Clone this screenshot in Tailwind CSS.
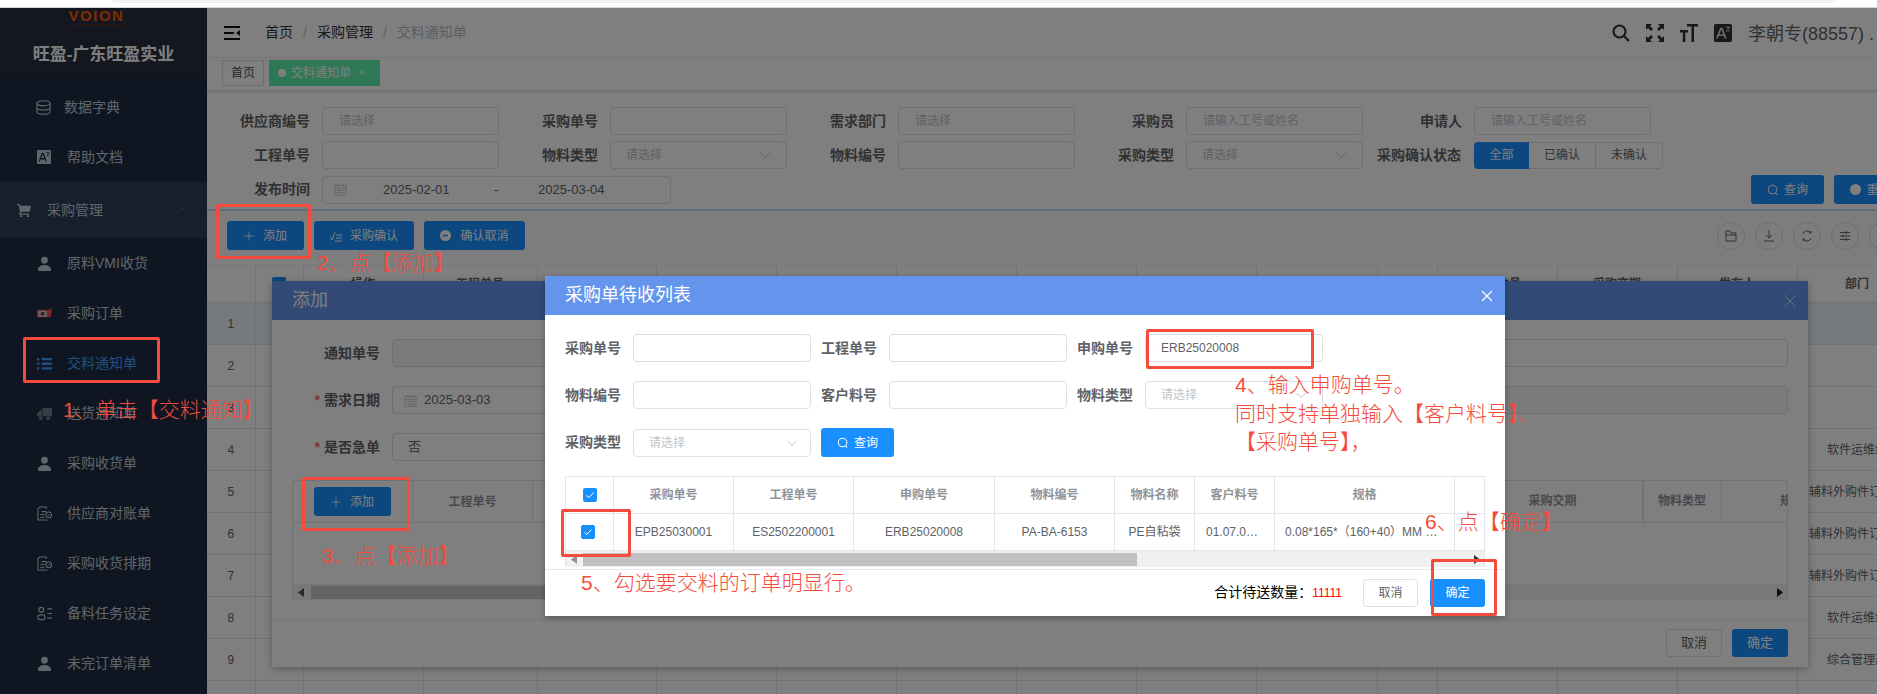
<!DOCTYPE html>
<html lang="zh-CN">
<head>
  <meta charset="UTF-8">
  <title>交料通知单</title>
  <script src="https://cdn.jsdelivr.net/npm/@tailwindcss/browser@4"></script>
</head>
<body class="relative h-[694px] w-[1877px] overflow-hidden bg-white font-['Liberation_Sans','Noto_Sans_CJK_SC',sans-serif] text-[12px] text-[#606266]">
  <svg class="absolute h-0 w-0">
    <symbol id="i-user" viewBox="0 0 16 16"><circle cx="8" cy="4.5" r="3.6" fill="currentColor"/><path d="M1 15c0-4 3-5.5 7-5.5s7 1.500 7 5.500c0 .6-.4 1-1 1H2c-.6 0-1-.4-1-1z" fill="currentColor"/></symbol>
    <symbol id="i-doc" viewBox="0 0 16 16"><path d="M10 3V1H3L1 3v12h10M5 6h5M3.500 9H8M3.500 12H8" fill="none" stroke="currentColor" stroke-width="1.100"/><circle cx="12.500" cy="9.500" r="3" fill="none" stroke="currentColor" stroke-width="1.100"/><path d="M11.200 9.500l1 1 1.500-1.800" fill="none" stroke="currentColor"/></symbol>
    <symbol id="i-calendar" viewBox="0 0 14 14"><path d="M1 2.500h12v10.500H1zM1 5.500h12M4 1v2.500M10 1v2.500M3 8h8M3 10.500h8" fill="none" stroke="currentColor"/></symbol>
    <symbol id="i-chevron" viewBox="0 0 12 12"><path d="M1.500 4 6 8.500 10.500 4" fill="none" stroke="currentColor"/></symbol>
    <symbol id="i-search" viewBox="0 0 14 14"><circle cx="6.500" cy="6.500" r="5" fill="none" stroke="currentColor" stroke-width="1.200"/><path d="M10 10.500l2 2" stroke="currentColor" stroke-width="1.200"/></symbol>
    <symbol id="i-plus" viewBox="0 0 12 12"><path d="M6 .5v11M.5 6h11" stroke="currentColor"/></symbol>
  </svg>

  <!-- browser strip above the captured page -->
  <div class="h-[8px] border-b border-[#d4d4d4]"><div class="ml-[112px] mr-[42px] h-[3px] rounded-bl-[4px] bg-[#f1f3f5]"></div></div>

  <div class="flex h-[686px]">
    <aside class="w-[207px] shrink-0 bg-[#1f2d42] text-[14px] text-[#bfcbd9]">
      <div class="h-[70px] bg-[#282e3e] pt-[1px] text-center">
        <div class="h-[13px] pr-[14px] text-[15px] leading-[13px] font-bold tracking-[1.500px] text-[#ff5a00]">VOION</div>
        <div class="mx-auto mt-[2px] h-0 w-[48px] -translate-x-[7px] border-t border-dotted border-[#6b3a20]"></div>
        <div class="mt-[18px] text-[17px] leading-[24px] font-bold text-white">旺盈-广东旺盈实业</div>
      </div>
      <nav class="pt-[4px]">
        <a class="flex h-[50px] items-center pl-[36px]"><svg class="mr-[13px] h-[15px] w-[15px]" viewBox="0 0 16 16" fill="none" stroke="currentColor" stroke-width="1.200"><ellipse cx="8" cy="3.500" rx="7" ry="2.700"/><path d="M1 3.500v9c0 1.500 3 2.700 7 2.700s7-1.200 7-2.700v-9M1 8c0 1.500 3 2.700 7 2.700S15 9.500 15 8"/></svg>数据字典</a>
        <a class="flex h-[50px] items-center pl-[37px]"><svg class="mr-[16px] h-[14px] w-[14px]" viewBox="0 0 16 16"><rect width="16" height="16" rx="1" fill="currentColor"/><path d="M2.500 13 6 4h1l3.500 9M4 10h5" fill="none" stroke="#1f2d42" stroke-width="1.500"/><path d="M10.500 3h4M12.500 2v1M11 7l2.500-3.500M14 7l-2-2" fill="none" stroke="#1f2d42" stroke-width=".8"/></svg>帮助文档</a>
        <div class="flex h-[56px] items-center bg-[#2e3f5a] pl-[17px]"><svg class="mr-[16px] h-[14px] w-[14px]" viewBox="0 0 16 16" fill="currentColor"><path d="M0 1h3l.6 2H16l-1.500 7H5L4 12h10v1.500H2L3.500 10 1.800 2.500H0z"/><circle cx="4.500" cy="15" r="1.300"/><circle cx="12.500" cy="15" r="1.300"/></svg>采购管理<svg class="ml-[73px] h-[11px] w-[11px] rotate-180 text-[#5c6a80]"><use href="#i-chevron"/></svg></div>
        <a class="flex h-[50px] items-center pl-[37px]"><svg class="mr-[15px] h-[15px] w-[15px]"><use href="#i-user"/></svg>原料VMI收货</a>
        <a class="flex h-[50px] items-center pl-[37px]"><svg class="mr-[15px] h-[15px] w-[15px]" viewBox="0 0 16 16"><path d="M0 4h13l3-2-1 10H0z" fill="#e8485a"/><rect x="1.500" y="5" width="9" height="6.500" fill="#d9c5c8"/><rect x="4" y="6.500" width="4" height="3.500" fill="#5a4a50"/></svg>采购订单</a>
        <a class="flex h-[50px] items-center pl-[37px] text-[#409eff]"><svg class="mr-[15px] h-[15px] w-[15px]" viewBox="0 0 16 16" fill="currentColor"><path d="M0 2h2.500v2.500H0zM5 2h11v2.500H5zM0 7h2.500v2.500H0zM5 7h11v2.500H5zM0 12h2.500v2.500H0zM5 12h11v2.500H5z"/></svg>交料通知单</a>
        <a class="flex h-[50px] items-center pl-[37px]"><svg class="mr-[15px] h-[15px] w-[15px] opacity-50" viewBox="0 0 16 16" fill="currentColor"><path d="M6 2h10v9H6zM1 7l3-3h1v7H0V8z"/><circle cx="4" cy="13" r="2"/><circle cx="12" cy="13" r="2"/></svg>送货通知单</a>
        <a class="flex h-[50px] items-center pl-[37px]"><svg class="mr-[15px] h-[15px] w-[15px]"><use href="#i-user"/></svg>采购收货单</a>
        <a class="flex h-[50px] items-center pl-[37px]"><svg class="mr-[15px] h-[15px] w-[15px]"><use href="#i-doc"/></svg>供应商对账单</a>
        <a class="flex h-[50px] items-center pl-[37px]"><svg class="mr-[15px] h-[15px] w-[15px]"><use href="#i-doc"/></svg>采购收货排期</a>
        <a class="flex h-[50px] items-center pl-[37px]"><svg class="mr-[15px] h-[15px] w-[15px]" viewBox="0 0 16 16" fill="none" stroke="currentColor" stroke-width="1.300"><circle cx="4.500" cy="4" r="2.600"/><rect x="1" y="9.500" width="7.500" height="5" rx="2"/><path d="M11 3h5M11 8h5M11 13h5"/></svg>备料任务设定</a>
        <a class="flex h-[50px] items-center pl-[37px]"><svg class="mr-[15px] h-[15px] w-[15px]"><use href="#i-user"/></svg>未完订单清单</a>
      </nav>
    </aside>

    <main class="min-w-0 flex-1 overflow-hidden">
      <header class="flex h-[50px] items-center border-b border-[#f0f0f0] pl-[17px] text-[14px]">
        <svg class="mr-[25px] h-[14px] w-[16px] text-[#111]" viewBox="0 0 16 14" fill="currentColor"><path d="M0 0h16v2H0zM0 6h10v2H0zM0 12h16v2H0zM16 4v6l-4-3z"/></svg>
        <span class="text-[#303133]">首页</span><span class="mx-[10px] text-[#c0c4cc]">/</span>
        <span class="text-[#303133]">采购管理</span><span class="mx-[10px] text-[#c0c4cc]">/</span>
        <span class="text-[#b8bcc2]">交料通知单</span>
        <div class="ml-auto flex items-center text-[#303133]">
          <svg class="h-[18px] w-[18px]" viewBox="0 0 18 18" fill="none" stroke="currentColor" stroke-width="2.200"><circle cx="7.500" cy="7.500" r="6"/><path d="M12 12l5 5"/></svg>
          <svg class="ml-[16px] h-[18px] w-[18px]" viewBox="0 0 18 18" fill="currentColor"><path d="M0 0h6L4 2l3 3-2 2-3-3-2 2zM18 0v6l-2-2-3 3-2-2 3-3-2-2zM0 18v-6l2 2 3-3 2 2-3 3 2 2zM18 18h-6l2-2-3-3 2-2 3 3 2-2z"/></svg>
          <svg class="ml-[16px] h-[18px] w-[18px]" viewBox="0 0 18 18" fill="currentColor"><path d="M7 0h11v2.500h-4V18h-2.500V2.500H7zM0 6h8v2.500H5.300V18H2.800V8.500H0z"/></svg>
          <svg class="ml-[16px] h-[18px] w-[18px]" viewBox="0 0 16 16"><rect width="16" height="16" rx="1.500" fill="currentColor"/><path d="M2.500 13 6 4h1l3.500 9M4 10h5" fill="none" stroke="#d8d8d8" stroke-width="1.500"/><path d="M10.500 3h4M12.500 2v1M11 7l2.500-3.500M14 7l-2-2" fill="none" stroke="#d8d8d8" stroke-width=".8"/></svg>
          <span class="ml-[16px] mt-[4px] w-[129px] shrink-0 text-[18px] whitespace-nowrap text-[#606266]">李朝专(88557) .</span>
        </div>
      </header>

      <div class="flex h-[33px] items-center gap-[5px] border-b border-[#d8dce5] pb-[3px] pl-[15px] shadow-[0_1px_3px_rgba(0,0,0,0.12)]">
        <span class="flex h-[26px] w-[42px] items-center justify-center border border-[#d8dce5] text-[#495060]">首页</span>
        <span class="flex h-[26px] w-[111px] items-center bg-[#5cf0ad] pl-[9px] text-white"><i class="mr-[5px] h-[8px] w-[8px] rounded-full bg-white"></i>交料通知单<span class="ml-[8px] text-[10px]">×</span></span>
      </div>

      <form class="flex flex-col gap-[6px] pt-[16px] pl-[4px] text-[14px] font-bold">
        <div class="grid grid-cols-[repeat(5,288px)]">
          <label class="flex items-center justify-end gap-[12px]">供应商编号<input class="h-[28px] w-[177px] rounded-[4px] border border-[#dcdfe6] pl-[16px] text-[12px] font-normal placeholder:text-[#c0c4cc]" placeholder="请选择"></label>
          <label class="flex items-center justify-end gap-[12px]">采购单号<input class="h-[28px] w-[177px] rounded-[4px] border border-[#dcdfe6]"></label>
          <label class="flex items-center justify-end gap-[12px]">需求部门<input class="h-[28px] w-[177px] rounded-[4px] border border-[#dcdfe6] pl-[16px] text-[12px] font-normal placeholder:text-[#c0c4cc]" placeholder="请选择"></label>
          <label class="flex items-center justify-end gap-[12px]">采购员<input class="h-[28px] w-[177px] rounded-[4px] border border-[#dcdfe6] pl-[16px] text-[12px] font-normal placeholder:text-[#c0c4cc]" placeholder="请输入工号或姓名"></label>
          <label class="flex items-center justify-end gap-[12px]">申请人<input class="h-[28px] w-[177px] rounded-[4px] border border-[#dcdfe6] pl-[16px] text-[12px] font-normal placeholder:text-[#c0c4cc]" placeholder="请输入工号或姓名"></label>
        </div>
        <div class="grid grid-cols-[repeat(5,288px)]">
          <label class="flex items-center justify-end gap-[12px]">工程单号<input class="h-[28px] w-[177px] rounded-[4px] border border-[#dcdfe6]"></label>
          <div class="flex items-center justify-end gap-[12px]">物料类型<div class="flex h-[28px] w-[177px] items-center justify-between rounded-[4px] border border-[#dcdfe6] px-[15px] text-[12px] font-normal text-[#c0c4cc]">请选择<svg class="h-[12px] w-[12px]"><use href="#i-chevron"/></svg></div></div>
          <label class="flex items-center justify-end gap-[12px]">物料编号<input class="h-[28px] w-[177px] rounded-[4px] border border-[#dcdfe6]"></label>
          <div class="flex items-center justify-end gap-[12px]">采购类型<div class="flex h-[28px] w-[177px] items-center justify-between rounded-[4px] border border-[#dcdfe6] px-[15px] text-[12px] font-normal text-[#c0c4cc]">请选择<svg class="h-[12px] w-[12px]"><use href="#i-chevron"/></svg></div></div>
          <div class="-mr-[12px] flex items-center justify-end gap-[13px] whitespace-nowrap">采购确认状态
            <div class="flex h-[27px] shrink-0 text-[12px] font-normal">
              <span class="flex w-[55px] items-center justify-center rounded-l-[4px] bg-[#1890ff] text-white">全部</span>
              <span class="flex w-[66px] items-center justify-center border-y border-[#dcdfe6]">已确认</span>
              <span class="flex w-[68px] items-center justify-center rounded-r-[4px] border border-[#dcdfe6]">未确认</span>
            </div>
          </div>
        </div>
        <div class="flex h-[29px] items-center">
          <span class="w-[99px] shrink-0 text-right">发布时间</span>
          <div class="ml-[12px] flex h-[28px] w-[349px] shrink-0 items-center rounded-[4px] border border-[#dcdfe6] pl-[11px] text-[13px] font-normal">
            <svg class="h-[13px] w-[13px] text-[#c0c4cc]"><use href="#i-calendar"/></svg>
            <span class="ml-[36px] w-[111px]">2025-02-01</span><span class="w-[44px]">-</span><span>2025-03-04</span>
          </div>
          <button type="button" class="ml-[1080px] flex h-[29px] w-[73px] shrink-0 items-center justify-center gap-[5px] rounded-[3px] bg-[#1890ff] text-[12px] font-normal text-white"><svg class="h-[12px] w-[12px]"><use href="#i-search"/></svg>查询</button>
          <button type="button" class="ml-[10px] flex h-[29px] w-[73px] shrink-0 items-center justify-center gap-[5px] rounded-[3px] bg-[#1890ff] text-[12px] font-normal text-white"><i class="h-[11px] w-[11px] rounded-full bg-white"></i>重置</button>
        </div>
      </form>

      <div class="mt-[5px] flex h-[51px] items-center border-t-2 border-[#bcdcff] bg-[#f8faf8] pl-[20px]">
        <button class="flex h-[29px] w-[77px] shrink-0 items-center justify-center gap-[9px] rounded-[3px] bg-[#1890ff] text-white"><svg class="h-[10px] w-[10px]"><use href="#i-plus"/></svg>添加</button>
        <button class="ml-[10px] flex h-[29px] w-[100px] shrink-0 items-center justify-center gap-[8px] rounded-[3px] bg-[#1890ff] text-white"><svg class="h-[12px] w-[12px]" viewBox="0 0 12 12" fill="none" stroke="currentColor"><path d="M0 7l2 3 3-8M6 5h6M6 8h6M5 11h7"/></svg>采购确认</button>
        <button class="ml-[10px] flex h-[29px] w-[101px] shrink-0 items-center justify-center gap-[9px] rounded-[3px] bg-[#1890ff] text-white"><svg class="h-[11px] w-[11px]" viewBox="0 0 11 11"><circle cx="5.500" cy="5.500" r="5.500" fill="currentColor"/><path d="M3 5.500h5" stroke="#1890ff" stroke-width="1.500"/></svg>确认取消</button>
        <div class="ml-[1192px] flex shrink-0 gap-[10px] text-[#606266]">
          <span class="flex h-[28px] w-[28px] items-center justify-center rounded-full border border-[#dcdfe6]"><svg class="h-[12px] w-[12px]" viewBox="0 0 12 12" fill="none" stroke="currentColor"><path d="M1 1h4l1 2h5v8H1zM1 5h10"/></svg></span>
          <span class="flex h-[28px] w-[28px] items-center justify-center rounded-full border border-[#dcdfe6]"><svg class="h-[12px] w-[12px]" viewBox="0 0 12 12" fill="none" stroke="currentColor"><path d="M6 0v8M3 5l3 3 3-3M1 11h10"/></svg></span>
          <span class="flex h-[28px] w-[28px] items-center justify-center rounded-full border border-[#dcdfe6]"><svg class="h-[12px] w-[12px]" viewBox="0 0 12 12" fill="none" stroke="currentColor"><path d="M2 4a4.500 4.500 0 0 1 8-1M10 8a4.500 4.500 0 0 1-8 1M10 1v2H8M2 11V9h2"/></svg></span>
          <span class="flex h-[28px] w-[28px] items-center justify-center rounded-full border border-[#dcdfe6]"><svg class="h-[12px] w-[12px]" viewBox="0 0 12 12" fill="none" stroke="currentColor"><path d="M1 2.500h10M1 6h10M1 9.500h10M7 1v3M4 4.500v3M7 8v3"/></svg></span>
          <span class="flex h-[28px] w-[28px] shrink-0 rounded-full border border-[#dcdfe6]"></span>
        </div>
      </div>

      <table class="mt-[5px] w-[1710px] table-fixed border-t border-[#ebeef5] text-center [&_td]:border-r [&_td]:border-b [&_td]:border-[#e2e5ea] [&_th]:border-r [&_th]:border-b [&_th]:border-[#e2e5ea]">
        <colgroup><col class="w-[48px]"><col class="w-[48px]"><col class="w-[120px]"><col class="w-[114px]"><col class="w-[119px]"><col class="w-[120px]"><col class="w-[120px]"><col class="w-[120px]"><col class="w-[120px]"><col class="w-[120px]"><col class="w-[121px]"><col class="w-[60px]"><col class="w-[120px]"><col class="w-[120px]"><col class="w-[120px]"><col class="w-[120px]"></colgroup>
        <thead><tr class="h-[37px] font-bold"><th></th><th><i class="mx-auto block h-[14px] w-[14px] rounded-[2px] bg-[#1890ff]"></i></th><th>操作</th><th>工程单号</th><th></th><th></th><th></th><th></th><th></th><th></th><th></th><th></th><th>采购数量</th><th>采购交期</th><th>发布人</th><th>部门</th></tr></thead>
        <tbody>
          <tr class="h-[42px] bg-[#ecf5ff]"><td>1</td><td></td><td></td><td></td><td></td><td></td><td></td><td></td><td></td><td></td><td></td><td></td><td></td><td></td><td></td><td></td></tr>
          <tr class="h-[42px]"><td>2</td><td></td><td></td><td></td><td></td><td></td><td></td><td></td><td></td><td></td><td></td><td></td><td></td><td></td><td></td><td></td></tr>
          <tr class="h-[42px]"><td>3</td><td></td><td></td><td></td><td></td><td></td><td></td><td></td><td></td><td></td><td></td><td></td><td></td><td></td><td></td><td></td></tr>
          <tr class="h-[42px]"><td>4</td><td></td><td></td><td></td><td></td><td></td><td></td><td></td><td></td><td></td><td></td><td></td><td></td><td></td><td></td><td>软件运维组</td></tr>
          <tr class="h-[42px]"><td>5</td><td></td><td></td><td></td><td></td><td></td><td></td><td></td><td></td><td></td><td></td><td></td><td></td><td></td><td></td><td>辅料外购件订单组</td></tr>
          <tr class="h-[42px]"><td>6</td><td></td><td></td><td></td><td></td><td></td><td></td><td></td><td></td><td></td><td></td><td></td><td></td><td></td><td></td><td>辅料外购件订单组</td></tr>
          <tr class="h-[42px]"><td>7</td><td></td><td></td><td></td><td></td><td></td><td></td><td></td><td></td><td></td><td></td><td></td><td></td><td></td><td></td><td>辅料外购件订单组</td></tr>
          <tr class="h-[42px]"><td>8</td><td></td><td></td><td></td><td></td><td></td><td></td><td></td><td></td><td></td><td></td><td></td><td></td><td></td><td></td><td>软件运维组</td></tr>
          <tr class="h-[42px]"><td>9</td><td></td><td></td><td></td><td></td><td></td><td></td><td></td><td></td><td></td><td></td><td></td><td></td><td></td><td></td><td>综合管理部</td></tr>
          <tr class="h-[42px]"><td>10</td><td><i class="mx-auto block h-[14px] w-[14px] rounded-[2px] border border-[#dcdfe6]"></i></td><td></td><td></td><td></td><td></td><td></td><td></td><td></td><td></td><td></td><td></td><td></td><td></td><td></td><td></td></tr>
        </tbody>
      </table>
    </main>
  </div>

  <!-- 添加 dialog, below the dimming layer -->
  <section class="absolute top-[281px] left-[272px] h-[386px] w-[1536px] bg-white shadow-[0_2px_8px_rgba(0,0,0,0.3)]">
    <div class="flex h-[39px] items-center justify-between bg-[#6495ed] pr-[11px] pl-[20px] text-[18px] text-white">添加<svg class="h-[14px] w-[14px] opacity-60" viewBox="0 0 14 14" stroke="currentColor"><path d="M1 1l12 12M13 1 1 13"/></svg></div>
    <div class="grid grid-cols-2 gap-y-[19px] pt-[19px] text-[14px] font-bold">
      <label class="flex items-center pr-[20px]"><span class="w-[108px] text-right">通知单号</span><input disabled class="ml-[12px] h-[28px] flex-1 rounded-[4px] border border-[#dcdfe6] bg-[#f5f7fa]"></label>
      <div class="pr-[20px] pl-[120px]"><input class="h-[28px] w-full rounded-[4px] border border-[#dcdfe6]"></div>
      <div class="flex items-center pr-[20px]"><span class="w-[108px] text-right"><b class="mr-[4px] text-[#f56c6c]">*</b>需求日期</span><div class="ml-[12px] flex h-[28px] flex-1 items-center gap-[7px] rounded-[4px] border border-[#dcdfe6] pl-[11px] text-[13px] font-normal"><svg class="h-[13px] w-[13px] text-[#c0c4cc]"><use href="#i-calendar"/></svg>2025-03-03</div></div>
      <div class="pr-[20px] pl-[120px]"><input disabled class="h-[28px] w-full rounded-[4px] border border-[#dcdfe6] bg-[#f5f7fa]"></div>
      <div class="flex items-center pr-[20px]"><span class="w-[108px] text-right"><b class="mr-[4px] text-[#f56c6c]">*</b>是否急单</span><div class="ml-[12px] flex h-[28px] w-[400px] items-center rounded-[4px] border border-[#dcdfe6] pl-[15px] text-[13px] font-normal">否</div></div>
    </div>
    <div class="mx-[20px] mt-[19px] h-[120px] overflow-hidden border-x border-t border-[#dfe2e8]">
      <div class="flex h-[42px] w-[1600px] border-b border-[#dfe2e8] text-center font-bold text-[#909399]">
        <div class="flex w-[120px] items-center border-r border-[#dfe2e8] pl-[21px]"><button class="flex h-[29px] w-[77px] items-center justify-center gap-[9px] rounded-[3px] bg-[#1890ff] font-normal text-white"><svg class="h-[10px] w-[10px]"><use href="#i-plus"/></svg>添加</button></div>
        <div class="flex w-[120px] items-center justify-center border-r border-[#dfe2e8]">工程单号</div>
        <div class="w-[1111px] border-r border-[#dfe2e8]"></div>
      </div>
      <div class="h-[61px]"></div>
      <div class="relative flex h-[17px] items-center bg-[#f1f1f1]"><svg class="ml-[5px] h-[9px] w-[6px] text-[#505050]" viewBox="0 0 6 9" fill="currentColor"><path d="M6 0v9L0 4.500z"/></svg><div class="ml-[7px] h-[13px] w-[1190px] bg-[#c8c8c8]"></div><svg class="absolute right-[4px] h-[9px] w-[6px] text-[#202020]" viewBox="0 0 6 9" fill="currentColor"><path d="M0 0v9l6-4.500z"/></svg></div>
    </div>
    <div class="relative -top-[120px] ml-[1191px] flex h-[42px] w-[325px] overflow-hidden text-center font-bold text-[#909399]">
      <div class="flex w-[180px] items-center justify-center border-r border-[#dfe2e8]">采购交期</div>
      <div class="flex w-[79px] items-center justify-center border-r border-[#dfe2e8]">物料类型</div>
      <div class="flex w-[66px] items-center pl-[58px] whitespace-nowrap">规格</div>
    </div>
    <div class="-mt-[23px] flex justify-end gap-[10px] border-t border-[#e8eaee] pt-[9px] pr-[20px]">
      <button class="h-[28px] w-[56px] rounded-[3px] border border-[#dcdfe6] text-[13px]">取消</button>
      <button class="h-[28px] w-[56px] rounded-[3px] bg-[#1890ff] text-[13px] text-white">确定</button>
    </div>
  </section>

  <!-- dimming layer -->
  <div class="absolute inset-x-0 top-[8px] bottom-0 bg-[#00000080]"></div>

  <!-- 采购单待收列表 dialog -->
  <section class="absolute top-[276px] left-[545px] flex h-[340px] w-[960px] flex-col bg-white shadow-[0_2px_6px_rgba(0,0,0,0.3)]">
    <div class="flex h-[39px] shrink-0 items-center justify-between bg-[#6495ed] pr-[12px] pl-[20px] text-[18px] text-white">采购单待收列表<svg class="h-[12px] w-[12px]" viewBox="0 0 12 12" stroke="currentColor" stroke-width="1.200"><path d="M1 1l10 10M11 1 1 11"/></svg></div>
    <form class="flex flex-col gap-[19px] pt-[19px] pl-[20px] text-[14px] font-bold">
      <div class="flex items-center"><label class="w-[56px]">采购单号</label><input class="ml-[12px] h-[28px] w-[178px] rounded-[4px] border border-[#dcdfe6]"><label class="ml-[10px] w-[56px]">工程单号</label><input class="ml-[12px] h-[28px] w-[178px] rounded-[4px] border border-[#dcdfe6]"><label class="ml-[10px] w-[56px]">申购单号</label><input value="ERB25020008" class="ml-[12px] h-[28px] w-[178px] rounded-[4px] border border-[#dcdfe6] pl-[15px] text-[12px] font-normal"></div>
      <div class="flex items-center"><label class="w-[56px]">物料编号</label><input class="ml-[12px] h-[28px] w-[178px] rounded-[4px] border border-[#dcdfe6]"><label class="ml-[10px] w-[56px]">客户料号</label><input class="ml-[12px] h-[28px] w-[178px] rounded-[4px] border border-[#dcdfe6]"><label class="ml-[10px] w-[56px]">物料类型</label><div class="ml-[12px] flex h-[28px] w-[178px] items-center justify-between rounded-[4px] border border-[#dcdfe6] px-[15px] text-[12px] font-normal text-[#c0c4cc]">请选择<svg class="h-[12px] w-[12px]"><use href="#i-chevron"/></svg></div></div>
      <div class="flex items-center"><label class="w-[56px]">采购类型</label><div class="ml-[12px] flex h-[28px] w-[178px] items-center justify-between rounded-[4px] border border-[#dcdfe6] pr-[12px] pl-[15px] text-[12px] font-normal text-[#c0c4cc]">请选择<svg class="h-[12px] w-[12px]"><use href="#i-chevron"/></svg></div><button type="button" class="ml-[10px] flex h-[29px] w-[73px] items-center justify-center gap-[5px] rounded-[3px] bg-[#1890ff] text-[12px] font-normal text-white"><svg class="h-[12px] w-[12px]"><use href="#i-search"/></svg>查询</button></div>
    </form>
    <div class="mx-[20px] mt-[19px] w-[920px]">
      <table class="w-full table-fixed border-t border-l border-[#e2e6ee] text-center [&_td]:border-r [&_td]:border-b [&_td]:border-[#e2e6ee] [&_th]:border-r [&_th]:border-b [&_th]:border-[#e2e6ee]">
        <colgroup><col class="w-[48px]"><col class="w-[120px]"><col class="w-[120px]"><col class="w-[141px]"><col class="w-[120px]"><col class="w-[80px]"><col class="w-[80px]"><col class="w-[180px]"><col></colgroup>
        <thead><tr class="h-[37px] font-bold text-[#909399]"><th><span class="mx-auto flex h-[14px] w-[14px] items-center justify-center rounded-[2px] bg-[#1890ff]"><svg class="h-[10px] w-[10px]" viewBox="0 0 10 10" fill="none" stroke="white"><path d="M1.500 5.500l2.500 2 4.500-5"/></svg></span></th><th>采购单号</th><th>工程单号</th><th>申购单号</th><th>物料编号</th><th>物料名称</th><th>客户料号</th><th>规格</th><th></th></tr></thead>
        <tbody><tr class="h-[37px]"><td><span class="ml-[15px] flex h-[14px] w-[14px] items-center justify-center rounded-[2px] bg-[#1890ff]"><svg class="h-[10px] w-[10px]" viewBox="0 0 10 10" fill="none" stroke="white"><path d="M1.500 5.500l2.500 2 4.500-5"/></svg></span></td><td>EPB25030001</td><td>ES2502200001</td><td>ERB25020008</td><td>PA-BA-6153</td><td>PE自粘袋</td><td class="truncate px-[11px]">01.07.01.0032</td><td class="truncate px-[10px]">0.08*165*（160+40）MM 透明袋</td><td></td></tr></tbody>
      </table>
      <div class="relative flex h-[16px] items-center border-x border-[#e2e6ee] bg-[#f0f0f0]"><svg class="ml-[5px] h-[9px] w-[6px] text-[#909090]" viewBox="0 0 6 9" fill="currentColor"><path d="M6 0v9L0 4.500z"/></svg><div class="ml-[6px] h-[13px] w-[554px] bg-[#c0c0c0]"></div><svg class="absolute right-[4px] h-[9px] w-[6px] text-[#303030]" viewBox="0 0 6 9" fill="currentColor"><path d="M0 0v9l6-4.500z"/></svg></div>
    </div>
    <footer class="mt-[2px] flex flex-1 items-center border-t border-[#e6e8f0] pr-[20px] pb-[1px]">
      <span class="ml-auto text-[14px] text-black">合计待送数量：</span><span class="text-[12px] text-[#f00]">11111</span>
      <button class="ml-[21px] h-[28px] w-[55px] rounded-[3px] border border-[#dcdfe6]">取消</button>
      <button class="ml-[12px] h-[28px] w-[55px] rounded-[3px] bg-[#1890ff] text-white">确定</button>
    </footer>
  </section>

  <!-- red tutorial annotations drawn over the screenshot -->
  <div class="absolute top-[337px] left-[23px] h-[46px] w-[137px] rounded-[2px] border-[3px] border-[#f44b3d]"></div>
  <div class="absolute top-[204px] left-[216px] h-[55px] w-[95px] rounded-[2px] border-[3px] border-[#f44b3d]"></div>
  <div class="absolute top-[477px] left-[302px] h-[54px] w-[108px] rounded-[2px] border-[3px] border-[#f44b3d]"></div>
  <div class="absolute top-[329px] left-[1146px] h-[40px] w-[168px] rounded-[2px] border-[3px] border-[#f44b3d]"></div>
  <div class="absolute top-[509px] left-[561px] h-[48px] w-[70px] rounded-[2px] border-[3px] border-[#f44b3d]"></div>
  <div class="absolute top-[559px] left-[1431px] h-[57px] w-[66px] rounded-[2px] border-[3px] border-[#f44b3d]"></div>
  <p class="absolute top-[396px] left-[63px] text-[21px] leading-[28px] font-light whitespace-nowrap text-[#f44b3d]">1、单击【交料通知】</p>
  <p class="absolute top-[249px] left-[317px] text-[21px] leading-[28px] font-light whitespace-nowrap text-[#f44b3d]">2、点【添加】</p>
  <p class="absolute top-[542px] left-[322px] text-[21px] leading-[28px] font-light whitespace-nowrap text-[#f44b3d]">3、点【添加】</p>
  <p class="absolute top-[371px] left-[1235px] text-[21px] leading-[28.500px] font-light whitespace-nowrap text-[#f44b3d]">4、输入申购单号。<br>同时支持单独输入【客户料号】、<br>【采购单号】，</p>
  <p class="absolute top-[569px] left-[581px] text-[21px] leading-[28px] font-light whitespace-nowrap text-[#f44b3d]">5、勾选要交料的订单明显行。</p>
  <p class="absolute top-[508px] left-[1425px] text-[21px] leading-[28px] font-light whitespace-nowrap text-[#f44b3d]">6、点【确定】</p>
</body>
</html>
